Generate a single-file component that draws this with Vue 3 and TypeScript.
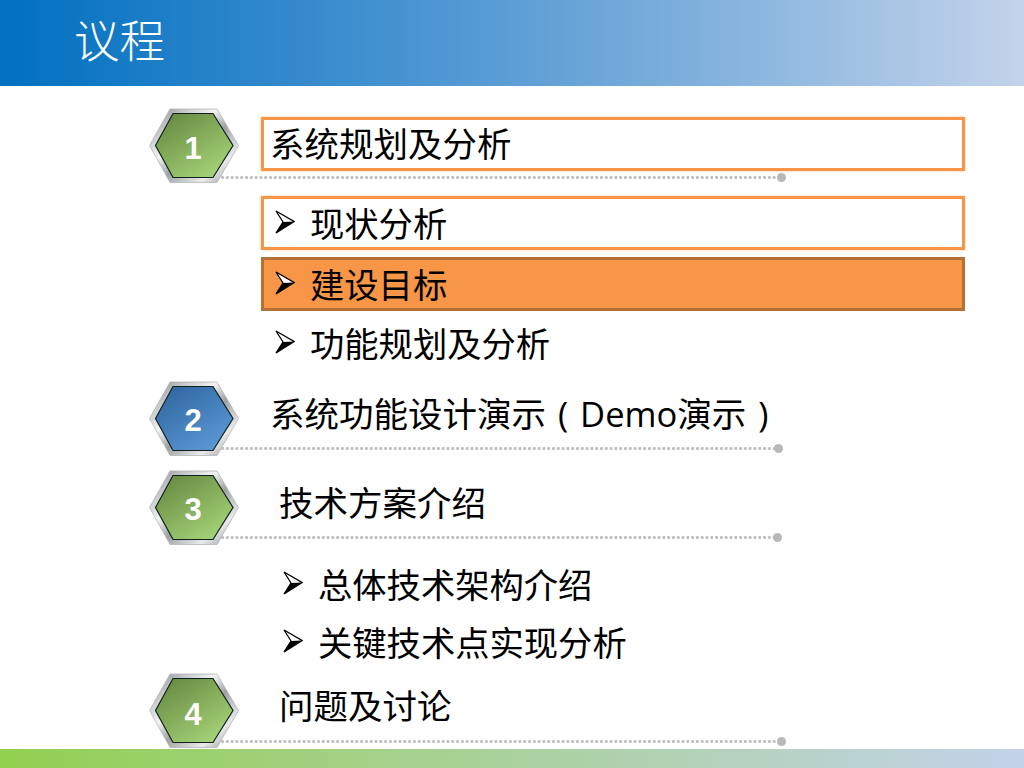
<script setup lang="ts">
interface Item { text: string; state?: 'outline' | 'active' | 'short'; }
interface Section {
  num: number; tone: 'green' | 'blue'; title: string; boxed?: boolean; indented?: boolean;
  lineEnd: number; lineTop: number; top: number; numY: number; listTop?: number; items?: Item[];
}
const sections: Section[] = [
  { num: 1, tone: 'green', title: '系统规划及分析', boxed: true, lineEnd: 633, lineTop: 68, top: 22, numY: 51, listTop: 13,
    items: [{ text: '现状分析', state: 'outline' }, { text: '建设目标', state: 'active' }, { text: '功能规划及分析', state: 'short' }] },
  { num: 2, tone: 'blue', title: '系统功能设计演示 ( Demo演示 )', lineEnd: 630, lineTop: 66, top: 13, numY: 50 },
  { num: 3, tone: 'green', title: '技术方案介绍', indented: true, lineEnd: 629, lineTop: 66, top: 14, numY: 50, listTop: 12,
    items: [{ text: '总体技术架构介绍' }, { text: '关键技术点实现分析' }] },
  { num: 4, tone: 'green', title: '问题及讨论', indented: true, lineEnd: 633, lineTop: 67, top: 4, numY: 52 },
];
</script>

<template>
  <div class="slide">
    <header class="header"><h1 class="title">议程</h1></header>
    <main class="agenda">
      <section v-for="s in sections" :key="s.num" class="section" :class="{ indented: s.indented }" :style="{ marginTop: s.top + 'px' }">
        <div class="head">
          <svg class="hex" viewBox="0 0 90 76" width="90" height="76">
            <defs>
              <linearGradient :id="'metal' + s.num" x1="0" y1="0" x2="1" y2="1">
                <stop offset="0" stop-color="#7f8387" />
                <stop offset="0.22" stop-color="#c9cbcd" />
                <stop offset="0.38" stop-color="#f4f4f4" />
                <stop offset="0.55" stop-color="#9ea1a4" />
                <stop offset="0.78" stop-color="#e9eaea" />
                <stop offset="1" stop-color="#85888c" />
              </linearGradient>
              <linearGradient :id="'fill' + s.num" x1="0.1" y1="0" x2="0.85" y2="1">
                <stop offset="0" :stop-color="s.tone === 'blue' ? '#2f659f' : '#64883f'" />
                <stop offset="1" :stop-color="s.tone === 'blue' ? '#5c9bd8' : '#a9d77b'" />
              </linearGradient>
            </defs>
            <polygon points="0.5,37.5 21,1 68,1 89.5,37.5 68,74.5 21,74.5" :fill="'url(#metal' + s.num + ')'" stroke="#b4b6b8" stroke-width="0.8" />
            <polygon points="6.5,37.5 24,5.5 64,5.5 84,37.5 64,69.5 24,69.5" :fill="'url(#fill' + s.num + ')'" stroke="#10201c" stroke-width="1.2" />
            <text class="num" x="44" :y="s.numY" text-anchor="middle">{{ s.num }}</text>
          </svg>
          <h2 class="heading" :class="{ boxed: s.boxed }">{{ s.title }}</h2>
          <div class="rule" :style="{ width: s.lineEnd - 72 + 'px', top: s.lineTop + 'px' }"></div>
        </div>
        <ul v-if="s.items" class="list" :style="{ marginTop: s.listTop + 'px' }">
          <li v-for="it in s.items" :key="it.text" class="item" :class="it.state">
            <svg class="arrow" viewBox="0 0 20 24" width="20" height="24">
              <path d="M1 1 L19 11.5 L1 23 L8 12 Z" fill="#fff" stroke="#000" stroke-width="1.3" stroke-linejoin="miter" />
              <path d="M1 23 L19 11.5 L8 12 Z" fill="#000" />
            </svg>
            <span>{{ it.text }}</span>
          </li>
        </ul>
      </section>
    </main>
    <footer class="footer"></footer>
  </div>
</template>

<style scoped>
.slide {
  width: 1024px;
  height: 768px;
  overflow: hidden;
  display: flex;
  flex-direction: column;
  background: #fff;
  font-family: "Noto Sans CJK SC", sans-serif;
  color: #000;
}
.header {
  height: 86px;
  flex: none;
  display: flex;
  align-items: center;
  padding: 0 0 8px 74px;
  box-sizing: border-box;
  background: linear-gradient(90deg, #0070c0 0%, #3f8fcf 35%, #7fb0dc 68%, #c3d3ea 100%);
}
.title {
  margin: 0;
  font-size: 45.5px;
  font-weight: 300;
  line-height: 1;
  color: #fff;
}
.agenda {
  flex: 1;
  min-height: 0;
  padding-left: 149px;
}
.section { width: 816px; }
.head {
  position: relative;
  height: 75px;
  display: flex;
  align-items: flex-start;
}
.hex { flex: none; display: block; position: relative; z-index: 1; }
.num {
  font-family: "Liberation Sans", sans-serif;
  font-weight: 700;
  font-size: 31px;
  fill: #fff;
}
.heading {
  margin: 7px 0 0 22px;
  width: 704px;
  height: 54px;
  box-sizing: border-box;
  padding: 0 0 0 9px;
  font-size: 34.5px;
  font-weight: 400;
  line-height: 52px;
  word-spacing: 3px;
  font-family: "Open Sans", "Noto Sans CJK SC", sans-serif;
  white-space: nowrap;
  flex: none;
}
.heading.boxed {
  margin-top: 9px;
  border: 3px solid #f79646;
  line-height: 48px;
  padding-left: 6px;
  box-shadow: 0 0 2px rgba(247, 150, 70, 0.6);
}
.indented .heading { padding-left: 18px; margin-top: 6.5px; }
.rule {
  position: absolute;
  left: 72px;
  height: 3px;
  background: radial-gradient(circle at 1.5px 1.5px, #bdbdbd 1.3px, transparent 1.6px) 0 0 / 4.8px 3px repeat-x;
}
.rule::after {
  content: "";
  position: absolute;
  right: -4px;
  top: -3px;
  width: 9px;
  height: 9px;
  border-radius: 50%;
  background: #b8b8b8;
}
.list {
  list-style: none;
  margin: 0;
  padding: 0 0 0 112px;
  display: flex;
  flex-direction: column;
  gap: 7px;
}
.item {
  width: 704px;
  height: 54px;
  box-sizing: border-box;
  display: flex;
  align-items: center;
  gap: 15px;
  padding: 0 0 2px 14px;
  font-size: 34.3px;
  line-height: 1;
  white-space: nowrap;
}
.item.outline {
  border: 3px solid #f79646;
  padding-left: 11px;
  box-shadow: 0 0 2px rgba(247, 150, 70, 0.6);
}
.item.active {
  border: 3px solid #b67035;
  padding-left: 11px;
  background: #f79646;
}
.item.short { height: 50px; }
.indented .list { gap: 4px; padding-left: 120px; }
.footer {
  height: 19px;
  flex: none;
  background: linear-gradient(90deg, #92d050 0%, #c2d3ea 100%);
}
</style>
